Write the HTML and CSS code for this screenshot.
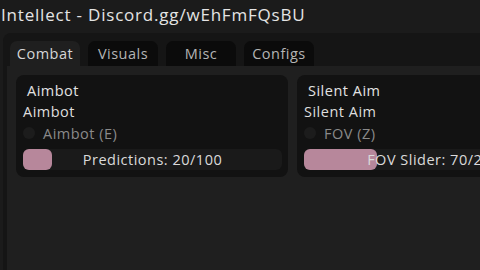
FILE: index.html
```html
<!DOCTYPE html>
<html lang="en">
<head>
  <meta charset="UTF-8">
  <title>Intellect</title>
  <link rel="stylesheet" href="styles.css">
</head>
<body>

<div class="title">Intellect - Discord.gg/wEhFmFQsBU</div>

<div class="window">
  <div class="tabs">
    <div class="tab active">Combat</div>
    <div class="tab">Visuals</div>
    <div class="tab">Misc</div>
    <div class="tab">Configs</div>
  </div>

  <div class="content">
    <div class="cards">
      <div class="card">
        <div class="card-title">Aimbot</div>
        <div class="label">Aimbot</div>
        <div class="check-row">
          <span class="check"></span>
          <span class="check-text">Aimbot (E)</span>
        </div>
        <div class="slider">
          <div class="slider-fill" style="width: 29px"></div>
          <div class="slider-text">Predictions: 20/100</div>
        </div>
      </div>

      <div class="card">
        <div class="card-title">Silent Aim</div>
        <div class="label">Silent Aim</div>
        <div class="check-row">
          <span class="check"></span>
          <span class="check-text">FOV (Z)</span>
        </div>
        <div class="slider">
          <div class="slider-fill" style="width: 73px"></div>
          <div class="slider-text">FOV Slider: 70/200</div>
        </div>
      </div>
    </div>
  </div>
</div>

</body>
</html>
```

FILE: styles.css
```css
body {
  margin: 0;
  width: 480px;
  height: 270px;
  overflow: hidden;
  background-color: #1b1b1b;
  font-family: "Open Sans", Arial, sans-serif;
  color: #dcdcdc;
}

.title {
  height: 33px;
  line-height: 30px;
  padding-left: 1px;
  font-size: 17px;
  letter-spacing: 0.8px;
  color: #e4e4e4;
  white-space: nowrap;
}

.window {
  margin-left: 3px;
  height: 237px;
  background-color: #151515;
  border-radius: 8px 0 0 0;
  display: flex;
  flex-direction: column;
}

.tabs {
  display: flex;
  gap: 8px;
  padding: 8px 0 0 7px;
}

.tab {
  width: 70px;
  height: 25px;
  line-height: 25px;
  text-align: center;
  font-size: 14.5px;
  letter-spacing: 0.5px;
  color: #b4b4b4;
  background-color: #0b0b0b;
  border-radius: 7px 7px 0 0;
}

.tab.active {
  background-color: #1f1f1f;
  color: #d6d6d6;
}

.content {
  flex: 1;
  margin-left: 4px;
  padding: 9px 0 0 9px;
  background-color: #1f1f1f;
  overflow: hidden;
}

.cards {
  display: flex;
  gap: 9px;
}

.card {
  flex: none;
  width: 272px;
  height: 102px;
  box-sizing: border-box;
  padding: 5px 6px 7px 7px;
  background-color: #121212;
  border-radius: 8px;
  font-size: 14.5px;
  letter-spacing: 0.5px;
}

.card-title {
  height: 22px;
  line-height: 22px;
  padding-left: 4px;
  color: #e2e2e2;
}

.label {
  height: 20px;
  line-height: 20px;
  color: #dedede;
}

.check-row {
  height: 22px;
  display: flex;
  align-items: center;
  gap: 8px;
}

.check {
  width: 12px;
  height: 12px;
  border-radius: 50%;
  background-color: #1c1c1c;
}

.check-text {
  color: #8a8a8a;
}

.slider {
  margin-top: 5px;
  width: 259px;
  height: 21px;
  display: grid;
  background-color: #1a1a1a;
  border-radius: 6px;
}

.slider-fill {
  grid-area: 1 / 1;
  height: 21px;
  background-color: #b7879b;
  border-radius: 6px;
}

.slider-text {
  grid-area: 1 / 1;
  line-height: 21px;
  text-align: center;
  color: #dadada;
  white-space: nowrap;
}
```
